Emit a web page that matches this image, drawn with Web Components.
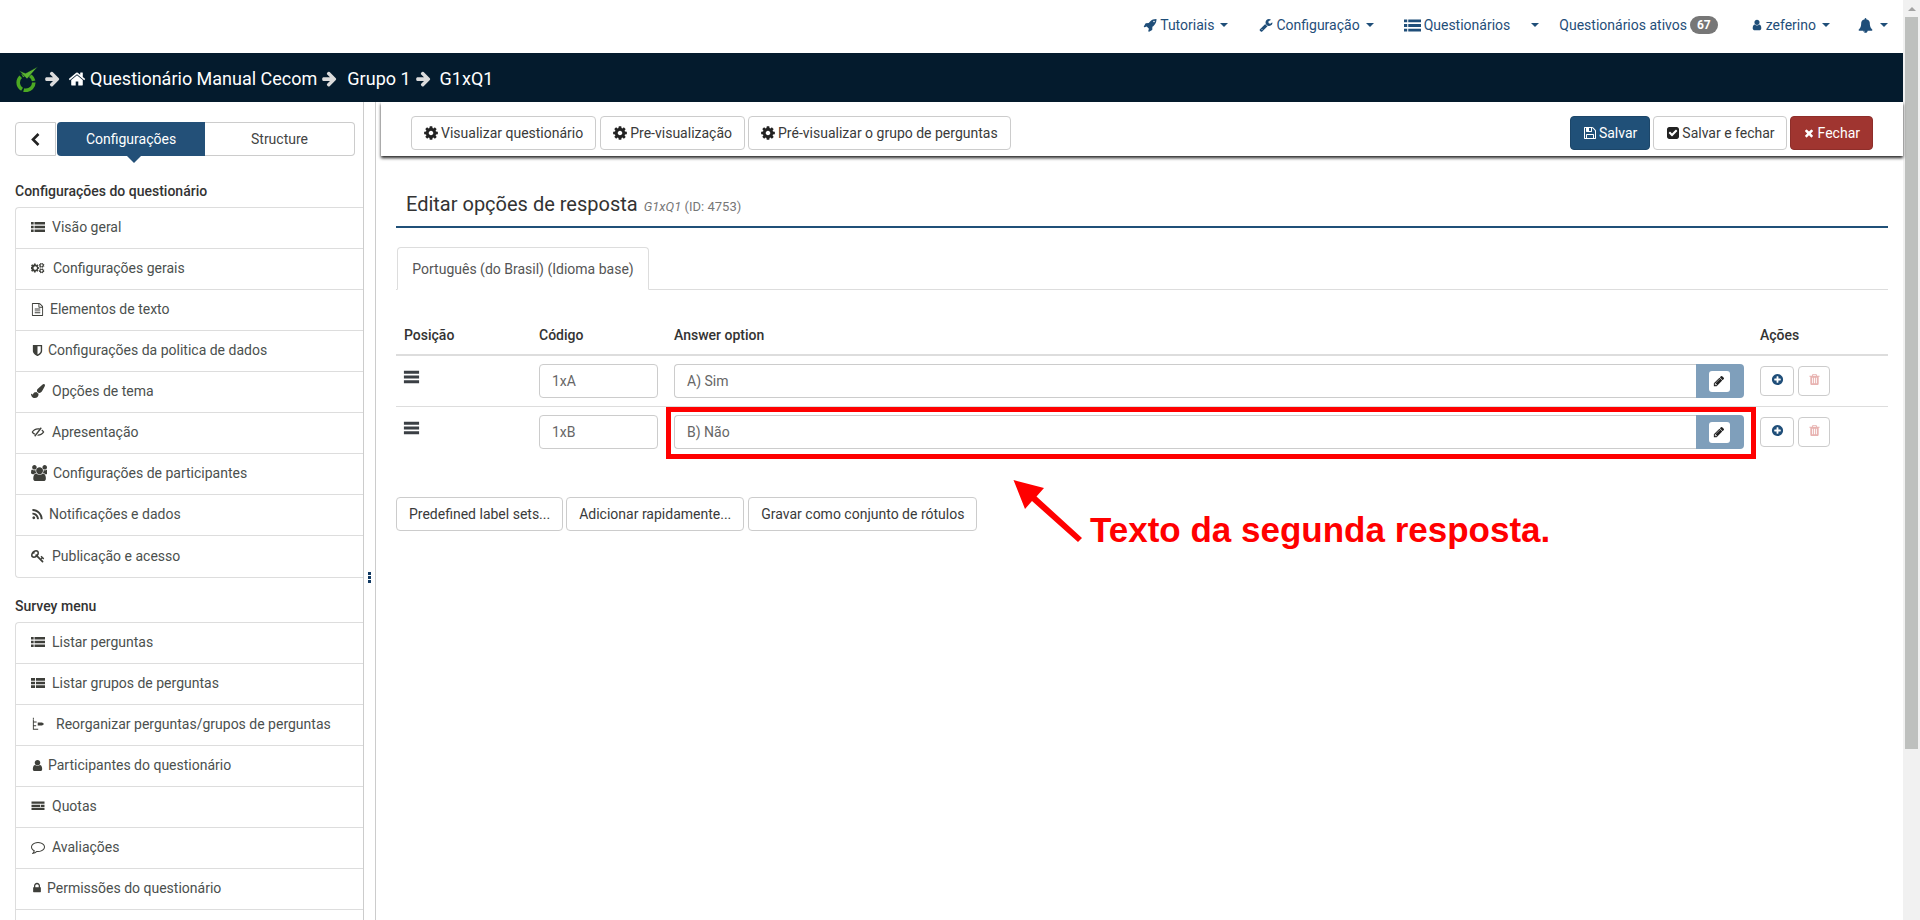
<!DOCTYPE html>
<html lang="pt-BR">
<head>
<meta charset="utf-8">
<title>Editar opções de resposta</title>
<style>
  html, body { margin: 0; height: 920px; overflow: hidden; background: #fff; }
  body { font-family: Roboto, "Liberation Sans", sans-serif; font-size: 14px; color: #3e4140; }
</style>
</head>
<body>
<lc-app></lc-app>

<script>
// Font Awesome 4 style glyphs, all on a 1792 grid
const ICONS = {
  rocket: 'M1504 448q0-40-28-68t-68-28-68 28-28 68 28 68 68 28 68-28 28-68zm224-288q0 249-75.5 430.5t-253.5 360.5q-81 80-195 176l-20 379q-2 16-16 26l-384 224q-7 4-16 4-12 0-23-9l-64-64q-13-14-8-32l85-276-281-281-276 85q-3 1-9 1-14 0-23-9l-64-64q-17-19-5-39l224-384q10-14 26-16l379-20q96-114 176-195 188-187 358-258t431-71q14 0 24 9.5t10 22.5z',
  wrench: 'M448 1472q0-26-19-45t-45-19-45 19-19 45 19 45 45 19 45-19 19-45zm644-420l-682 682q-37 37-90 37-52 0-91-37l-106-108q-38-36-38-90 0-53 38-91l681-681q39 98 114.5 173.5t173.5 114.5zm634-435q0 39-23 106-47 134-164.5 217.5t-258.5 83.5q-185 0-316.5-131.5t-131.5-316.5 131.5-316.5 316.5-131.5q58 0 121.5 16.5t107.5 46.5q16 11 16 28t-16 28l-293 169v224l193 107q5-3 79-48.5t135.5-81 70.5-35.5q15 0 23.5 10t8.5 25z',
  list: 'M0 256h340v310H0zM450 256h1342v310H450zM0 741h340v310H0zM450 741h1342v310H450zM0 1226h340v310H0zM450 1226h1342v310H450z',
  thlist: 'M0 256h520v340H0zM640 256h1152v340H640zM0 726h520v340H0zM640 726h1152v340H640zM0 1196h520v340H0zM640 1196h1152v340H640z',
  user: 'M1536 1399q0 109-62.5 187t-150.5 78h-854q-88 0-150.5-78t-62.5-187q0-85 8.5-160.5t31.5-152 58.5-131 94-89 134.5-34.5q131 128 313 128t313-128q76 0 134.5 34.5t94 89 58.5 131 31.5 152 8.5 160.5zm-256-887q0 159-112.5 271.5t-271.5 112.5-271.5-112.5-112.5-271.5 112.5-271.5 271.5-112.5 271.5 112.5 112.5 271.5z',
  bell: 'M912 1696q0-16-16-16-59 0-101.5-42.5t-42.5-101.5q0-16-16-16t-16 16q0 73 51.5 124.5t124.5 51.5q16 0 16-16zm816-288q0 52-38 90t-90 38h-448q0 106-75 181t-181 75-181-75-75-181h-448q-52 0-90-38t-38-90q50-42 91-88t85-119.5 74.5-158.5 50-206 19.5-260q0-152 117-282.5t307-158.5q-8-19-8-39 0-40 28-68t68-28 68 28 28 68q0 20-8 39 190 28 307 158.5t117 282.5q0 139 19.5 260t50 206 74.5 158.5 85 119.5 91 88z',
  arrow: 'M1600 960q0 54-37 91l-651 651q-39 37-91 37-51 0-90-37l-75-75q-38-38-38-91t38-91l293-293h-704q-52 0-84.5-37.5t-32.5-90.5v-128q0-53 32.5-90.5t84.5-37.5h704l-293-294q-38-36-38-90t38-90l75-75q38-38 90-38 53 0 91 38l651 651q37 35 37 90z',
  home: 'M1472 992v480q0 26-19 45t-45 19h-384v-384h-256v384h-384q-26 0-45-19t-19-45v-480q0-1 .5-3t.5-3l575-474 575 474q1 2 1 6zm223-69l-62 74q-8 9-21 11h-3q-13 0-21-7l-692-577-692 577q-12 8-24 7-13-2-21-11l-62-74q-8-10-7-23.5t11-21.5l719-599q32-26 76-26t76 26l244 204v-195q0-14 9-23t23-9h192q14 0 23 9t9 23v408l219 182q10 8 11 21.5t-7 23.5z',
  cog: 'M1152 896q0-106-75-181t-181-75-181 75-75 181 75 181 181 75 181-75 75-181zm512-109v222q0 12-8 23t-20 13l-185 28q-19 54-39 91 35 50 107 138 10 12 10 25t-9 23q-27 37-99 108t-94 71q-12 0-26-9l-138-108q-44 23-91 38-16 136-29 186-7 28-36 28h-222q-14 0-24.5-8.5t-11.5-21.5l-28-184q-49-16-90-37l-141 107q-10 9-25 9-14 0-25-11-126-114-165-168-7-10-7-23 0-12 8-23 15-21 51-66.5t54-70.5q-27-50-41-99l-183-27q-13-2-21-12.5t-8-23.5v-222q0-12 8-23t19-13l186-28q14-46 39-92-40-57-107-138-10-12-10-24 0-10 9-23 26-36 98.5-107.5t94.5-71.5q13 0 26 10l138 107q44-23 91-38 16-136 29-186 7-28 36-28h222q14 0 24.5 8.5t11.5 21.5l28 184q49 16 90 37l142-107q9-9 24-9 13 0 25 10 129 119 165 170 7 8 7 22 0 12-8 23-15 21-51 66.5t-54 70.5q26 50 41 98l183 28q13 2 21 12.5t8 23.5z',
  floppy: 'M512 1536h768v-384h-768v384zm896 0h128v-896q0-14-10-38.5t-20-34.5l-281-281q-10-10-34-20t-39-10v416q0 40-28 68t-68 28h-576q-40 0-68-28t-28-68v-416h-128v1280h128v-416q0-40 28-68t68-28h832q40 0 68 28t28 68v416zm-384-928v-320q0-13-9.5-22.5t-22.5-9.5h-192q-13 0-22.5 9.5t-9.5 22.5v320q0 13 9.5 22.5t22.5 9.5h192q13 0 22.5-9.5t9.5-22.5zm640 32v928q0 40-28 68t-68 28h-1344q-40 0-68-28t-28-68v-1344q0-40 28-68t68-28h928q40 0 88 20t76 48l280 280q28 28 48 76t20 88z',
  check: 'M813 1299l614-614q19-19 19-45t-19-45l-102-102q-19-19-45-19t-45 19l-467 467-211-211q-19-19-45-19t-45 19l-102 102q-19 19-19 45t19 45l358 358q19 19 45 19t45-19zm851-883v960q0 119-84.5 203.5t-203.5 84.5h-960q-119 0-203.5-84.5t-84.5-203.5v-960q0-119 84.5-203.5t203.5-84.5h960q119 0 203.5 84.5t84.5 203.5z',
  times: 'M1490 1322q0 40-28 68l-136 136q-28 28-68 28t-68-28l-294-294-294 294q-28 28-68 28t-68-28l-136-136q-28-28-28-68t28-68l294-294-294-294q-28-28-28-68t28-68l136-136q28-28 68-28t68 28l294 294 294-294q28-28 68-28t68 28l136 136q28 28 28 68t-28 68l-294 294 294 294q28 28 28 68z',
  pencil: 'M491 1536l91-91-235-235-91 91v107h128v128h107zm523-928q0-22-22-22-10 0-17 7l-542 542q-7 7-7 17 0 22 22 22 10 0 17-7l542-542q7-7 7-17zm-54-192l416 416-832 832h-416v-416zm683 96q0 53-37 90l-166 166-416-416 166-165q36-38 90-38 53 0 91 38l235 234q37 39 37 91z',
  plus: 'M1344 960v-128q0-26-19-45t-45-19h-256v-256q0-26-19-45t-45-19h-128q-26 0-45 19t-19 45v256h-256q-26 0-45 19t-19 45v128q0 26 19 45t45 19h256v256q0 26 19 45t45 19h128q26 0 45-19t19-45v-256h256q26 0 45-19t19-45zm320-64q0 209-103 385.5t-279.5 279.5-385.5 103-385.5-103-279.5-279.5-103-385.5 103-385.5 279.5-279.5 385.5-103 385.5 103 279.5 279.5 103 385.5z',
  trash: 'M704 1376v-704q0-14-9-23t-23-9h-64q-14 0-23 9t-9 23v704q0 14 9 23t23 9h64q14 0 23-9t9-23zm256 0v-704q0-14-9-23t-23-9h-64q-14 0-23 9t-9 23v704q0 14 9 23t23 9h64q14 0 23-9t9-23zm256 0v-704q0-14-9-23t-23-9h-64q-14 0-23 9t-9 23v704q0 14 9 23t23 9h64q14 0 23-9t9-23zm-544-992h448l-48-117q-7-9-17-11h-317q-10 2-17 11zm928 32v64q0 14-9 23t-23 9h-96v948q0 83-47 143.5t-113 60.5h-832q-66 0-113-58.5t-47-141.5v-952h-96q-14 0-23-9t-9-23v-64q0-14 9-23t23-9h309l70-167q15-37 54-63t79-26h320q40 0 79 26t54 63l70 167h309q14 0 23 9t9 23z',
  bars: 'M96 300h1600v300H96zM96 800h1600v300H96zM96 1300h1600v300H96z',
  users: 'M593 896q-162 5-265 128h-134q-82 0-138-40.5t-56-118.5q0-353 124-353 6 0 43.5 21t97.5 42.5 119 21.5q67 0 133-23-5 37-5 66 0 139 81 256zm1071 637q0 120-73 189.5t-194 69.5h-874q-121 0-194-69.5t-73-189.5q0-53 3.5-103.5t14-109 26.5-108.5 43-97.5 62-81 85.5-53.5 111.5-20q10 0 43 21.5t73 48 107 48 135 21.5 135-21.5 107-48 73-48 43-21.5q61 0 111.5 20t85.5 53.5 62 81 43 97.5 26.5 108.5 14 109 3.5 103.5zm-1024-1277q0 106-75 181t-181 75-181-75-75-181 75-181 181-75 181 75 75 181zm704 384q0 159-112.5 271.5t-271.5 112.5-271.5-112.5-112.5-271.5 112.5-271.5 271.5-112.5 271.5 112.5 112.5 271.5zm576 225q0 78-56 118.5t-138 40.5h-134q-103-123-265-128 81-117 81-256 0-29-5-66 66 23 133 23 59 0 119-21.5t97.5-42.5 43.5-21q124 0 124 353zm-128-609q0 106-75 181t-181 75-181-75-75-181 75-181 181-75 181 75 75 181z',
  rss: 'M576 1344q0 80-56 136t-136 56-136-56-56-136 56-136 136-56 136 56 56 136zm512 123q2 28-17 48-18 21-47 21h-135q-25 0-43-16.5t-20-41.5q-22-229-184.5-391.5t-391.5-184.5q-25-2-41.5-20t-16.5-43v-135q0-29 21-47 17-17 43-17h5q160 13 306 80.5t259 181.5q114 113 181.5 259t80.5 306zm512 2q2 27-18 47-18 20-46 20h-143q-26 0-44.5-17.5t-19.5-42.5q-12-215-101-408.5t-231.5-336-336-231.5-408.5-102q-25-1-42.5-19.5t-17.5-43.5v-143q0-28 20-46 18-18 44-18h3q262 13 501.5 120t425.5 294q187 186 294 425.5t120 501.5z',
  lock: 'M640 768h512v-192q0-106-75-181t-181-75-181 75-75 181v192zm832 96v576q0 40-28 68t-68 28h-960q-40 0-68-28t-28-68v-576q0-40 28-68t68-28h32v-192q0-184 132-316t316-132 316 132 132 316v192h32q40 0 68 28t28 68z',
  brush: 'M1615 0q70 0 122.5 46.5t52.5 116.5q0 63-45 151-332 629-465 752-97 91-218 91-126 0-216.5-92.5t-90.5-219.5q0-128 92-212l638-579q59-54 130-54zm-909 1034q39 76 106.5 130t150.5 76l1 71q4 213-129.5 347t-348.5 134q-123 0-218-46.5t-152.5-127.5-86.5-183-29-220q7 5 41 30t62 44.5 59 36.5 46 17q41 0 55-37 25-66 57.5-112.5t69.5-76 88-47.5 103-25.5 125-10.5z',
  shield: 'M1344 960v-640h-448v1137q119-63 213-137 235-184 235-360zm192-768v768q0 86-33.5 170.5t-83 150-118 127.5-126.5 103-121 77.5-89.5 49.5-42.5 20q-12 6-26 6t-26-6q-16-7-42.5-20t-89.5-49.5-121-77.5-126.5-103-118-127.5-83-150-33.5-170.5v-768q0-26 19-45t45-19h1152q26 0 45 19t19 45z',
  comment: 'M896 384q-204 0-381.5 69.5t-282 187.5-104.5 255q0 112 71.5 213.5t201.5 175.5l87 50-27 96q-24 91-70 172 152-63 275-171l43-38 57 6q69 8 130 8 204 0 381.5-69.5t282-187.5 104.5-255-104.5-255-282-187.5-381.5-69.5zm896 512q0 174-120 321.5t-326 233-450 85.5q-70 0-145-8-198 175-460 242-49 14-114 22h-5q-15 0-27-10.5t-16-27.5v-1q-3-4-.5-12t2-10 4.5-9.5l6-9 7-8.5 8-9q7-8 31-34.5t34.5-38 31-39.5 32.5-51 27-59 26-76q-157-89-247.5-220t-90.5-281q0-174 120-321.5t326-233 450-85.5 450 85.5 326 233 120 321.5z',
  key: 'M832 512q0-80-56-136t-136-56-136 56-56 136q0 42 19 83-41-19-83-19-80 0-136 56t-56 136 56 136 136 56 136-56 56-136q0-42-19-83 41 19 83 19 80 0 136-56t56-136zm851 704q0 17-49 66t-66 49q-9 0-28.5-16t-36.5-33-38.5-40-24.5-26l-96 96 220 220q28 28 28 68 0 42-39 81t-81 39q-40 0-68-28l-671-671q-176 131-365 131-163 0-265.5-102.5t-102.5-265.5q0-160 95-313t248-248 313-95q163 0 265.5 102.5t102.5 265.5q0 189-131 365l355 355 96-96q-3-3-26-24.5t-40-38.5-33-36.5-16-28.5q0-17 49-66t66-49q13 0 23 10 6 6 46 44.5t82 79.5 86.5 86 73 78 28.5 41z',
  file: 'M1596 380q28 28 48 76t20 88v1152q0 40-28 68t-68 28h-1344q-40 0-68-28t-28-68v-1600q0-40 28-68t68-28h896q40 0 88 20t76 48zm-444-244v376h376q-10-29-22-41l-313-313q-12-12-41-22zm384 1528v-1024h-416q-40 0-68-28t-28-68v-416h-768v1536h1280zm-1024-864q0-14 9-23t23-9h704q14 0 23 9t9 23v64q0 14-9 23t-23 9h-704q-14 0-23-9t-9-23v-64zm736 224q14 0 23 9t9 23v64q0 14-9 23t-23 9h-704q-14 0-23-9t-9-23v-64q0-14 9-23t23-9h704zm0 256q14 0 23 9t9 23v64q0 14-9 23t-23 9h-704q-14 0-23-9t-9-23v-64q0-14 9-23t23-9h704z',
  cogs: 'M760 896q0-90-64-154t-154-64-154 64-64 154 64 154 154 64 154-64 64-154zM1060 790v210l-160 26q-12 36-30 70l96 132-148 148-132-94q-34 18-70 30l-26 160H380l-26-160q-36-12-70-30l-132 94L4 1228l94-132q-18-34-30-70L-92 1000V790l160-26q12-36 30-70L4 562l148-148 132 94q34-18 70-30l26-160h210l26 160q36 12 70 30l132-94 148 148-96 132q18 34 30 70zM1360 420a120 120 0 1 0 1 0zM1360 300l70 10 40-70 90 40-20 80 50 50 80-20 40 90-70 40 0 70 70 40-40 90-80-20-50 50 20 80-90 40-40-70-70 10-70-10-40 70-90-40 20-80-50-50-80 20-40-90 70-40 0-70-70-40 40-90 80 20 50-50-20-80 90-40 40 70zM1360 1120a120 120 0 1 0 1 0zM1360 1000l70 10 40-70 90 40-20 80 50 50 80-20 40 90-70 40 0 70 70 40-40 90-80-20-50 50 20 80-90 40-40-70-70 10-70-10-40 70-90-40 20-80-50-50-80 20-40-90 70-40 0-70-70-40 40-90 80 20 50-50-20-80 90-40 40 70z',
  eyeslash: 'M80 896c180-280 460-470 816-470 120 0 230 22 330 60l-110 130c-70-22-140-34-220-34-270 0-490 130-640 314 80 96 180 180 300 236l-110 130C300 1190 170 1060 80 896zM1250 300l130 100-840 1090-130-100zM1430 560c120 80 210 200 282 336-180 280-460 470-816 470-40 0-80-2-118-8l120-150c260-10 470-140 616-312-50-60-110-118-180-166z',
  reorder: 'M240 80h120v200H240zM240 330h120v1300H240zM360 560h360v130H360zM360 1050h300v130H360zM360 1500h560v130H360zM860 700l560 0 260 200-260 200H860z',
  quotas: 'M64 320h1664v300H64zM64 720h1100v300H64zM1260 720h468v300H1260zM64 1120h1664v300H64z'
};

class LcIcon extends HTMLElement {
  connectedCallback() {
    const size = this.getAttribute('size') || 14;
    const d = ICONS[this.getAttribute('name')] || '';
    this.attachShadow({ mode: 'open' }).innerHTML = `
      <style>
        :host { display: inline-flex; flex: none; width: ${size}px; height: ${size}px; color: inherit; }
        svg { display: block; width: 100%; height: 100%; fill: currentColor; }
      </style>
      <svg viewBox="0 0 1792 1792" aria-hidden="true"><path d="${d}"/></svg>`;
  }
}
customElements.define('lc-icon', LcIcon);

// small dropdown triangle
class LcCaret extends HTMLElement {
  constructor() {
    super();
    this.attachShadow({ mode: 'open' }).innerHTML = `
      <style>
        :host { display: inline-block; flex: none; width: 0; height: 0;
                border-top: 4px solid currentColor; border-left: 4px solid transparent; border-right: 4px solid transparent; }
      </style>`;
  }
}
customElements.define('lc-caret', LcCaret);

class LcNavItem extends HTMLElement {
  constructor() {
    super();
    this.attachShadow({ mode: 'open' }).innerHTML = `
      <style>
        :host { display: flex; align-items: center; gap: var(--gap, 3px); color: #1f4e79; font-size: 14px; white-space: nowrap; }
      </style>
      <slot></slot>`;
  }
}
customElements.define('lc-nav-item', LcNavItem);

class LcTopNav extends HTMLElement {
  constructor() {
    super();
    this.attachShadow({ mode: 'open' }).innerHTML = `
      <style>
        :host { display: flex; justify-content: flex-end; align-items: center; height: 53px; padding: 0 15px 3px 0; box-sizing: border-box; background: #fff; }
        .badge { background: #777; color: #fff; font-size: 12px; font-weight: 700; border-radius: 10px; padding: 1.5px 7px; line-height: 15px; }
        .tut { margin-right: 31px; } .cfg { margin-right: 30px; } .que { margin-right: 20px; }
        .act { margin-right: 33px; } .usr { margin-right: 28px; }
        .cr { margin-left: 3px; }
        .que .cr { margin-left: 18px; }
      </style>
      <lc-nav-item class="tut"><lc-icon name="rocket" size="14"></lc-icon><span>Tutoriais</span><lc-caret class="cr"></lc-caret></lc-nav-item>
      <lc-nav-item class="cfg"><lc-icon name="wrench" size="14"></lc-icon><span>Configuração</span><lc-caret class="cr"></lc-caret></lc-nav-item>
      <lc-nav-item class="que"><lc-icon name="list" size="17"></lc-icon><span>Questionários</span><lc-caret class="cr"></lc-caret></lc-nav-item>
      <lc-nav-item class="act"><span>Questionários ativos</span><span class="badge">67</span></lc-nav-item>
      <lc-nav-item class="usr"><lc-icon name="user" size="12"></lc-icon><span>zeferino</span><lc-caret class="cr"></lc-caret></lc-nav-item>
      <lc-nav-item class="bel" style="--gap:7px"><lc-icon name="bell" size="15"></lc-icon><lc-caret></lc-caret></lc-nav-item>`;
  }
}
customElements.define('lc-top-nav', LcTopNav);

class LcBreadcrumb extends HTMLElement {
  constructor() {
    super();
    this.attachShadow({ mode: 'open' }).innerHTML = `
      <style>
        :host { display: flex; align-items: center; height: 49px; padding: 2px 0 0 14px; background: #041b2d; color: #fff; font-size: 18px; white-space: nowrap; box-sizing: border-box; }
        svg.logo { flex: none; width: 25px; height: 26px; margin-right: 5px; }
        .sep { color: #dcdcdc; }
        .home { margin: 0 4px 0 7px; }
        .s2 { margin: 0 9px 0 4px; }
        .s3 { margin: 0 8px 0 4px; }
      </style>
      <svg class="logo" viewBox="0 0 25 26">
        <circle cx="12" cy="16.5" r="7.8" fill="none" stroke="#4ca923" stroke-width="3.6" stroke-dasharray="14.5 1.8"/>
        <path d="M5 4.5 L11.5 7.2 L24 0.5 L13 13 Z" fill="#5cb531" stroke="#041b2d" stroke-width=".6"/>
      </svg>
      <lc-icon class="sep" name="arrow" size="17"></lc-icon>
      <lc-icon class="home" name="home" size="18"></lc-icon>
      <span>Questionário Manual Cecom</span>
      <lc-icon class="sep s2" name="arrow" size="17"></lc-icon>
      <span>Grupo 1</span>
      <lc-icon class="sep s3" name="arrow" size="17"></lc-icon>
      <span>G1xQ1</span>`;
  }
}
customElements.define('lc-breadcrumb', LcBreadcrumb);

class LcMenuItem extends HTMLElement {
  connectedCallback() {
    const gap = this.getAttribute('gap') || 7;
    const w = this.getAttribute('w') || 14;
    this.attachShadow({ mode: 'open' }).innerHTML = `
      <style>
        :host { display: flex; align-items: center; height: 41px; padding: 0 0 2px 15px; box-sizing: border-box; border-bottom: 1px solid #ddd; color: #4b504e; font-size: 14px; white-space: nowrap; }
        :host(:last-child) { border-bottom: 0; }
        lc-icon { color: #3e3f3a; margin-right: ${gap}px; }
      </style>
      <lc-icon name="${this.getAttribute('icon')}" size="${w}"></lc-icon><slot></slot>`;
  }
}
customElements.define('lc-menu-item', LcMenuItem);

class LcMenuList extends HTMLElement {
  connectedCallback() {
    this.attachShadow({ mode: 'open' }).innerHTML = `
      <style>
        :host { display: block; }
        h4 { margin: 0 0 5px; font-size: 14px; line-height: 22px; font-weight: 500; color: #333; }
        .list { border: 1px solid #ddd; border-right: 0; border-radius: 4px 0 0 4px; }
      </style>
      <h4>${this.getAttribute('heading')}</h4>
      <div class="list"><slot></slot></div>`;
  }
}
customElements.define('lc-menu-list', LcMenuList);

class LcSideTabs extends HTMLElement {
  constructor() {
    super();
    this.attachShadow({ mode: 'open' }).innerHTML = `
      <style>
        :host { display: flex; height: 34px; font-size: 14px; }
        .back { width: 41px; box-sizing: border-box; border: 1px solid #ccc; border-radius: 4px 0 0 4px; display: flex; align-items: center; justify-content: center; color: #222; }
        .tab { position: relative; width: 150px; display: flex; align-items: center; justify-content: center; box-sizing: border-box; border: 1px solid #ccc; border-left: 0; color: #444; }
        .tab:last-child { border-radius: 0 4px 4px 0; }
        .tab.on { background: #235078; color: #fff; width: 148px; border: 0; border-radius: 4px 0 0 4px; margin-left: 1px; }
        .tab.on::after { content: ""; position: absolute; left: 70px; bottom: -7px; border-top: 7px solid #235078; border-left: 7px solid transparent; border-right: 7px solid transparent; }
        svg { width: 9px; height: 13px; fill: none; stroke: #222; stroke-width: 2.6; }
      </style>
      <div class="back"><svg viewBox="0 0 9 13"><path d="M7.5 1 L2 6.5 L7.5 12"/></svg></div>
      <div class="tab on">Configurações</div>
      <div class="tab">Structure</div>`;
  }
}
customElements.define('lc-side-tabs', LcSideTabs);

class LcSidebar extends HTMLElement {
  constructor() {
    super();
    this.attachShadow({ mode: 'open' }).innerHTML = `
      <style>
        :host { display: block; flex: none; width: 363px; box-sizing: border-box; padding: 20px 0 0 15px; overflow: hidden; }
        lc-side-tabs { margin-right: 8px; }
        lc-menu-list { margin-top: 24px; }
        lc-menu-list.second { margin-top: 17px; }
      </style>
      <lc-side-tabs></lc-side-tabs>
      <lc-menu-list heading="Configurações do questionário">
        <lc-menu-item icon="list" gap="7">Visão geral</lc-menu-item>
        <lc-menu-item icon="cogs" gap="8">Configurações gerais</lc-menu-item>
        <lc-menu-item icon="file" gap="6" w="13">Elementos de texto</lc-menu-item>
        <lc-menu-item icon="shield" gap="4" w="13">Configurações da politica de dados</lc-menu-item>
        <lc-menu-item icon="brush" gap="7">Opções de tema</lc-menu-item>
        <lc-menu-item icon="eyeslash" gap="7">Apresentação</lc-menu-item>
        <lc-menu-item icon="users" gap="6" w="16">Configurações de participantes</lc-menu-item>
        <lc-menu-item icon="rss" gap="5" w="13">Notificações e dados</lc-menu-item>
        <lc-menu-item icon="key" gap="7">Publicação e acesso</lc-menu-item>
      </lc-menu-list>
      <lc-menu-list class="second" heading="Survey menu">
        <lc-menu-item icon="list" gap="7">Listar perguntas</lc-menu-item>
        <lc-menu-item icon="thlist" gap="7">Listar grupos de perguntas</lc-menu-item>
        <lc-menu-item icon="reorder" gap="11" w="14">Reorganizar perguntas/grupos de perguntas</lc-menu-item>
        <lc-menu-item icon="user" gap="4" w="13">Participantes do questionário</lc-menu-item>
        <lc-menu-item icon="quotas" gap="7">Quotas</lc-menu-item>
        <lc-menu-item icon="comment" gap="7">Avaliações</lc-menu-item>
        <lc-menu-item icon="lock" gap="4" w="12">Permissões do questionário</lc-menu-item>
        <lc-menu-item></lc-menu-item>
      </lc-menu-list>`;
  }
}
customElements.define('lc-sidebar', LcSidebar);

class LcButton extends HTMLElement {
  constructor() {
    super();
    this.attachShadow({ mode: 'open' }).innerHTML = `
      <style>
        :host { display: inline-flex; align-items: center; justify-content: center; gap: 3px; height: 34px; padding: 0 12px; box-sizing: border-box; border: 1px solid #ccc; border-radius: 4px; background: #fff; color: #3a3a3a; font-size: 14px; white-space: nowrap; }
        :host([kind=primary]) { background: #205078; border-color: #1c4669; color: #fff; }
        :host([kind=danger]) { background: #a03530; border-color: #8e2e2a; color: #fff; }
      </style>
      <slot></slot>`;
  }
}
customElements.define('lc-button', LcButton);

class LcToolbar extends HTMLElement {
  constructor() {
    super();
    this.attachShadow({ mode: 'open' }).innerHTML = `
      <style>
        :host { display: flex; justify-content: space-between; align-items: flex-start; height: 54px; margin-left: 5px; padding: 14px 30px 0 30px; box-sizing: border-box; background: #fff; box-shadow: 0 2px 3px #222; position: relative; }
        .group { display: flex; gap: 3px; }
        lc-icon { color: inherit; }
        .dark { color: #222; }
        .cog { margin: 0 -1px; }
        .first { margin-right: 1px; }
        .tight { gap: 2px; }
        .tighter { gap: 2px; padding: 0 11px 0 12px; }
      </style>
      <div class="group">
        <lc-button class="first"><lc-icon class="dark cog" name="cog" size="16"></lc-icon>Visualizar questionário</lc-button>
        <lc-button><lc-icon class="dark cog" name="cog" size="16"></lc-icon>Pre-visualização</lc-button>
        <lc-button><lc-icon class="dark cog" name="cog" size="16"></lc-icon>Pré-visualizar o grupo de perguntas</lc-button>
      </div>
      <div class="group">
        <lc-button class="tight" kind="primary"><lc-icon name="floppy" size="14"></lc-icon>Salvar</lc-button>
        <lc-button class="tighter"><lc-icon class="dark" name="check" size="14"></lc-icon>Salvar e fechar</lc-button>
        <lc-button kind="danger"><lc-icon name="times" size="12"></lc-icon>Fechar</lc-button>
      </div>`;
  }
}
customElements.define('lc-toolbar', LcToolbar);

class LcAnswerHead extends HTMLElement {
  constructor() {
    super();
    this.attachShadow({ mode: 'open' }).innerHTML = `
      <style>
        :host { display: grid; grid-template-columns: var(--cols); height: 31px; border-bottom: 2px solid #ddd; box-sizing: border-box; font-weight: 500; font-size: 14px; color: #333; }
        div { padding: 0 8px; line-height: 20px; }
      </style>
      <div>Posição</div><div>Código</div><div>Answer option</div><div>Ações</div>`;
  }
}
customElements.define('lc-answer-head', LcAnswerHead);

class LcAnswerRow extends HTMLElement {
  connectedCallback() {
    const last = this.hasAttribute('last');
    this.attachShadow({ mode: 'open' }).innerHTML = `
      <style>
        :host { display: grid; grid-template-columns: var(--cols); padding: 8px 0; box-sizing: border-box; height: 51px; ${last ? '' : 'border-bottom: 1px solid #ddd;'} }
        .cell { padding: 0 8px; display: flex; }
        .input { height: 34px; box-sizing: border-box; border: 1px solid #ccc; padding: 0 12px; display: flex; align-items: center; color: #666; font-size: 14px; border-radius: 4px; background: #fff; }
        .code { width: 119px; }
        .text { flex: 1; border-radius: 4px 0 0 4px; border-right: 0; }
        .edit { width: 48px; height: 34px; padding-right: 2px; box-sizing: border-box; background: #7f9fbb; border-radius: 0 4px 4px 0; display: flex; align-items: center; justify-content: center; flex: none; }
        .edit span { width: 21px; height: 21px; background: #fff; border-radius: 3px; display: flex; align-items: center; justify-content: center; color: #222; }
        .actions { gap: 4px; padding-top: 2px; }
        .act { height: 30px; box-sizing: border-box; border: 1px solid #ccc; border-radius: 4px; display: flex; align-items: center; justify-content: center; padding-bottom: 3px; }
        .add { width: 34px; color: #1f4e79; }
        .del { width: 32px; color: #e8b3b1; }
        .handle { color: #3a3f44; margin: 4px 0 0 -1px; }
      </style>
      <div class="cell"><lc-icon class="handle" name="bars" size="17"></lc-icon></div>
      <div class="cell"><div class="input code">${this.getAttribute('code')}</div></div>
      <div class="cell"><div class="input text">${this.getAttribute('text')}</div>
        <div class="edit"><span><lc-icon name="pencil" size="12"></lc-icon></span></div></div>
      <div class="cell actions">
        <div class="act add"><lc-icon name="plus" size="13"></lc-icon></div>
        <div class="act del"><lc-icon name="trash" size="13"></lc-icon></div>
      </div>`;
  }
}
customElements.define('lc-answer-row', LcAnswerRow);

class LcEditor extends HTMLElement {
  constructor() {
    super();
    this.attachShadow({ mode: 'open' }).innerHTML = `
      <style>
        :host { display: block; padding: 0 15px 0 20px; --cols: 135px 135px 1086px 136px; }
        .title { display: flex; align-items: baseline; gap: 6px; height: 45px; margin-top: 27px; padding: 9px 0 0 10px; box-sizing: border-box; border-bottom: 2px solid #205078; font-size: 20px; font-weight: 400; color: #333; }
        .title small { font-size: 13px; color: #777; }
        .title i { font-style: italic; }
        .tabs { display: flex; margin-top: 19px; height: 43px; border-bottom: 1px solid #ddd; box-sizing: border-box; }
        .tab { margin-left: 1px; margin-bottom: -1px; width: 252px; box-sizing: border-box; display: flex; align-items: center; justify-content: center; border: 1px solid #ddd; border-bottom-color: #fff; border-radius: 4px 4px 0 0; background: #fff; color: #555; font-size: 14px; }
        lc-answer-head { margin-top: 35px; }
        .foot { display: flex; gap: 3px; margin-top: 39px; }
        .foot .last { margin-left: 1px; }
      </style>
      <div class="title"><span>Editar opções de resposta</span><small><i>G1xQ1</i> (ID: 4753)</small></div>
      <div class="tabs"><div class="tab">Português (do Brasil) (Idioma base)</div></div>
      <lc-answer-head></lc-answer-head>
      <lc-answer-row code="1xA" text="A) Sim"></lc-answer-row>
      <lc-answer-row code="1xB" text="B) Não" last></lc-answer-row>
      <div class="foot">
        <lc-button>Predefined label sets...</lc-button>
        <lc-button>Adicionar rapidamente...</lc-button>
        <lc-button class="last">Gravar como conjunto de rótulos</lc-button>
      </div>`;
  }
}
customElements.define('lc-editor', LcEditor);

class LcGrip extends HTMLElement {
  constructor() {
    super();
    this.attachShadow({ mode: 'open' }).innerHTML = `
      <style>
        :host { flex: none; width: 13px; box-sizing: border-box; border-left: 1px solid #ccc; border-right: 1px solid #ccc; display: flex; flex-direction: column; align-items: center; padding-top: 470px; gap: 1px; }
        i { width: 3px; height: 3px; background: #123a63; }
      </style>
      <i></i><i></i><i></i>`;
  }
}
customElements.define('lc-grip', LcGrip);

class LcScrollbar extends HTMLElement {
  constructor() {
    super();
    this.attachShadow({ mode: 'open' }).innerHTML = `
      <style>
        :host { flex: none; width: 17px; height: 920px; background: #f1f1f1; display: flex; flex-direction: column; }
        .btn { height: 17px; display: flex; align-items: center; justify-content: center; }
        .btn::before { content: ""; border-bottom: 4px solid #a3a3a3; border-left: 4px solid transparent; border-right: 4px solid transparent; }
        .thumb { height: 732px; margin: 0 2px; background: #bec0be; }
      </style>
      <div class="btn"></div><div class="thumb"></div>`;
  }
}
customElements.define('lc-scrollbar', LcScrollbar);

// red annotation drawn over the screenshot: box, arrow and caption
class LcCallout extends HTMLElement {
  constructor() {
    super();
    this.attachShadow({ mode: 'open' }).innerHTML = `
      <style>
        :host { position: absolute; left: 0; top: 0; width: 1920px; height: 920px; pointer-events: none; }
        .box { position: absolute; left: 666px; top: 407px; width: 1090px; height: 52px; box-sizing: border-box; border: 5px solid #f00; }
        svg { position: absolute; left: 1000px; top: 470px; width: 100px; height: 80px; }
        .txt { position: absolute; left: 1090px; top: 510px; font: 700 35px/40px "Liberation Sans", Arial, sans-serif; color: #f00; white-space: nowrap; }
      </style>
      <div class="box"></div>
      <svg viewBox="1000 470 100 80"><path d="M1013.5 480 L1044 488 L1036.5 496.5 L1082 538 L1078 542 L1032 501 L1025 509 Z" fill="#f00"/></svg>
      <div class="txt">Texto da segunda resposta.</div>`;
  }
}
customElements.define('lc-callout', LcCallout);

class LcApp extends HTMLElement {
  constructor() {
    super();
    this.attachShadow({ mode: 'open' }).innerHTML = `
      <style>
        :host { display: flex; position: relative; width: 1920px; height: 920px; overflow: hidden; }
        .page { flex: 1; min-width: 0; display: flex; flex-direction: column; }
        .body { flex: 1; display: flex; min-height: 0; }
        .main { flex: 1; min-width: 0; }
      </style>
      <div class="page">
        <lc-top-nav></lc-top-nav>
        <lc-breadcrumb></lc-breadcrumb>
        <div class="body">
          <lc-sidebar></lc-sidebar>
          <lc-grip></lc-grip>
          <div class="main">
            <lc-toolbar></lc-toolbar>
            <lc-editor></lc-editor>
          </div>
        </div>
      </div>
      <lc-scrollbar></lc-scrollbar>
      <lc-callout></lc-callout>`;
  }
}
customElements.define('lc-app', LcApp);
</script>
</body>
</html>
